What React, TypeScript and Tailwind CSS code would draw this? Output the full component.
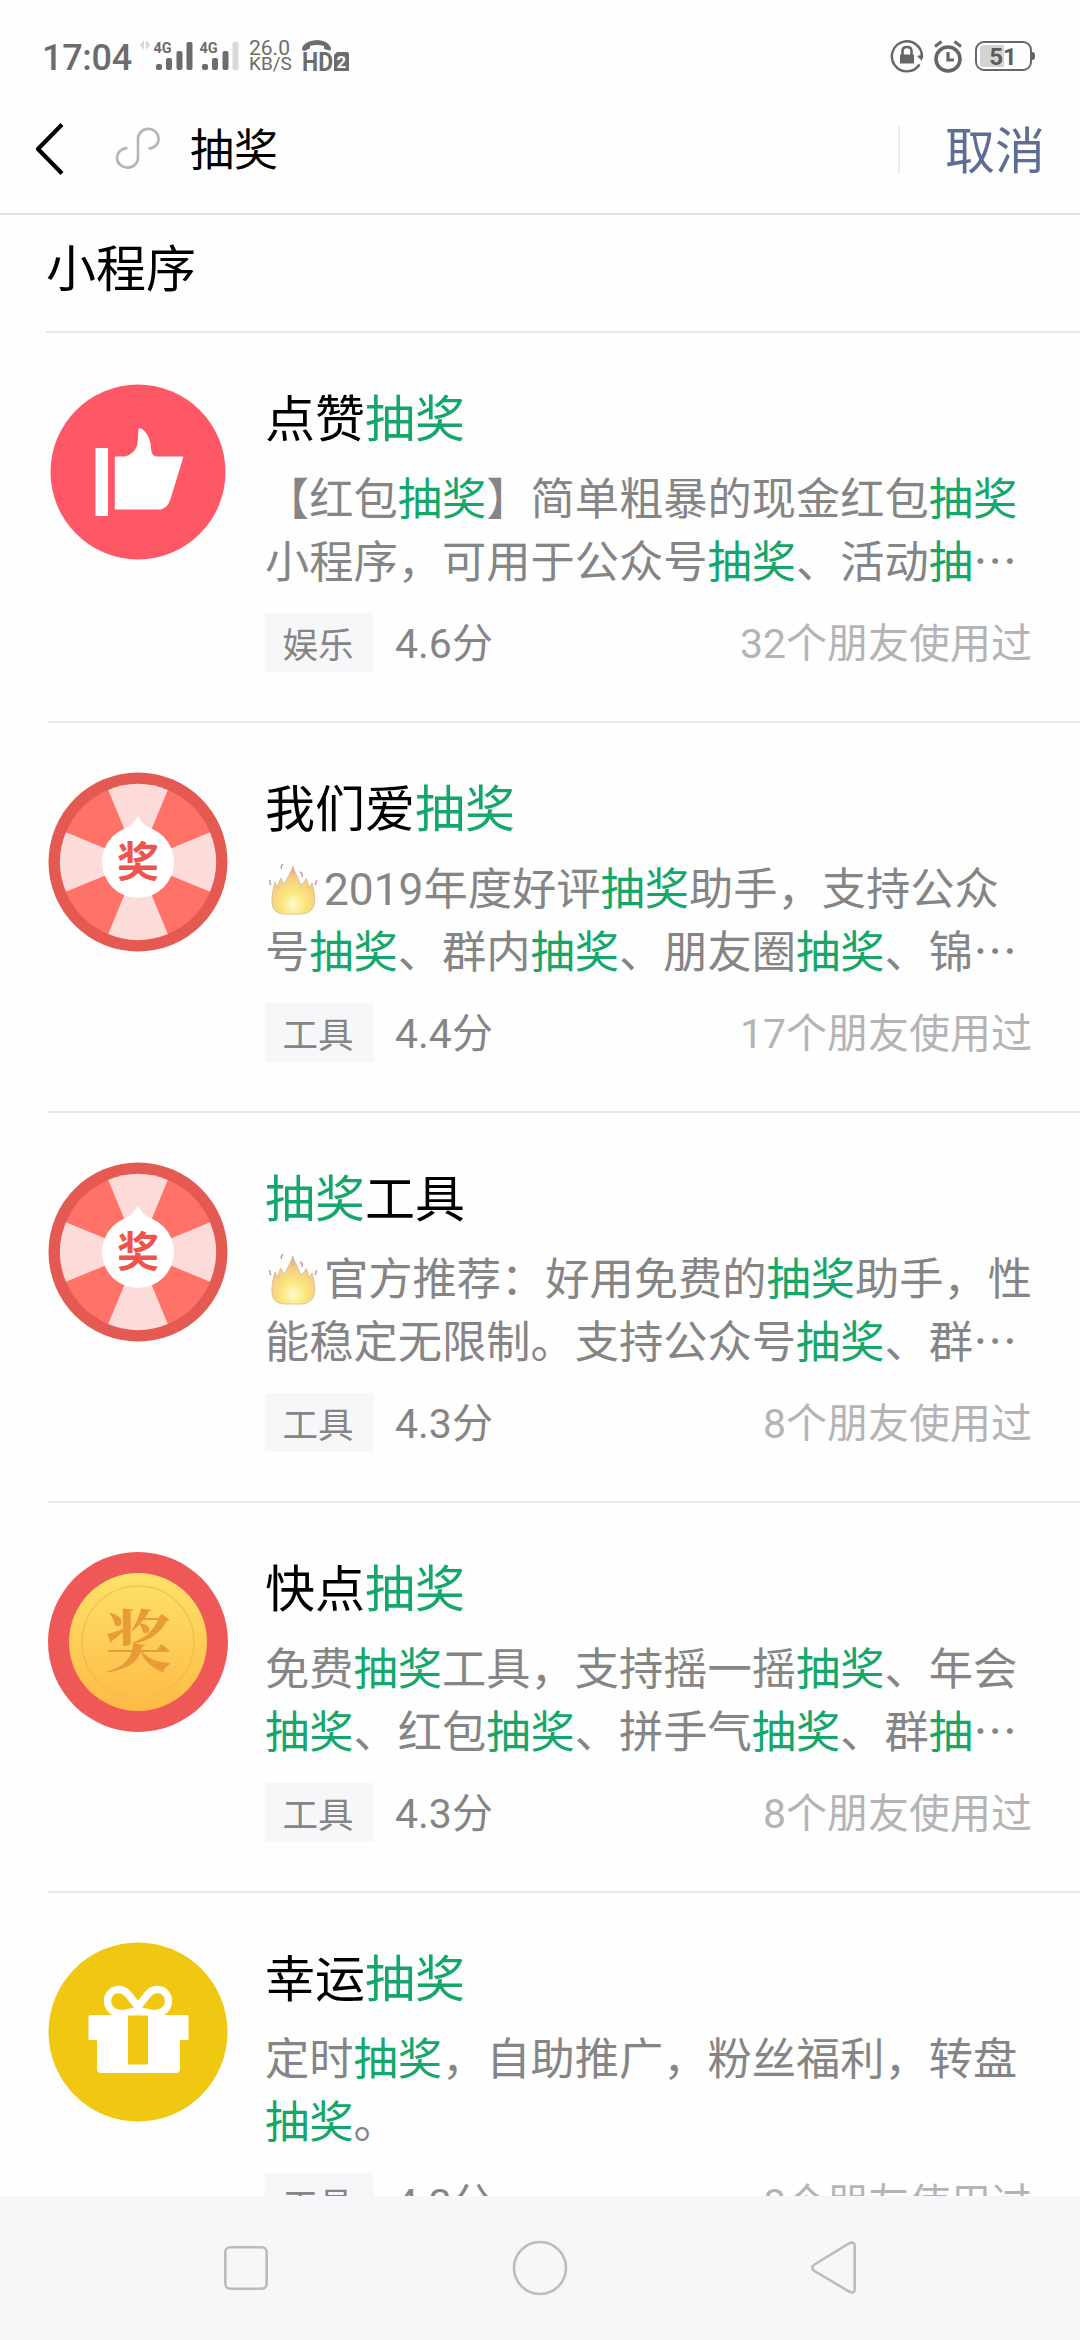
import type { ReactNode } from "react"

type AppItem = {
    icon: ReactNode
    title: string
    lines: string[]
    fire?: boolean
    more?: boolean
    tag: string
    score: string
    friends: number
}

const KEYWORD = "抽奖"

const LikeIcon = () => (
    <svg viewBox="0 0 180 180" className="size-[180px]">
        <circle cx="90" cy="90" r="87.5" fill="#fe5766" />
        <rect x="47.5" y="66" width="12.5" height="68" fill="#fff" />
        <path
            d="M66.8 74.500H77C85 72 89.500 67 89.800 58L90.500 47Q92 45 96 48.500Q102.500 55 103 66Q103 73 108 74.500H135.500L122.500 117Q119 127.500 111 127.500H66.800Z"
            fill="#fff"
        />
    </svg>
)

const WheelIcon = () => (
    <svg viewBox="0 0 180 180" className="size-[180px]">
        <circle cx="90" cy="90" r="89.5" fill="#e45a52" />
        <circle cx="90" cy="90" r="78" fill="#ff7268" />
        {[0, 90, 180, 270].map((deg) => (
            <path key={deg} d="M90 90L60.200 18A78 78 0 0 1 119.800 18Z" fill="#fddbd9" transform={`rotate(${deg} 90 90)`} />
        ))}
        <circle cx="90" cy="90" r="36" fill="#fff" />
        <path d="M90 44Q96 55 106 58L90 72L74 58Q84 55 90 44Z" fill="#fff" />
        <text x="90" y="105" textAnchor="middle" fontSize="42" fontWeight="700" fill="#ee544d" className="font-['Noto_Sans_CJK_SC',sans-serif]">奖</text>
    </svg>
)

const CoinIcon = () => (
    <svg viewBox="0 0 180 180" className="size-[180px]">
        <defs>
            <linearGradient id="coin" x1="0" y1="0" x2="0" y2="1">
                <stop offset="0" stopColor="#fee26a" />
                <stop offset="1" stopColor="#feba45" />
            </linearGradient>
        </defs>
        <circle cx="90" cy="90" r="90" fill="#ee5856" />
        <circle cx="90" cy="90" r="69" fill="url(#coin)" />
        <circle cx="90" cy="90" r="56" fill="none" stroke="#e9bd50" strokeWidth="1.2" />
        <text x="90" y="114" textAnchor="middle" fontSize="67" fontWeight="700" fill="#e79c38" className="font-['Noto_Serif_CJK_SC','Noto_Sans_CJK_SC',serif]">奖</text>
    </svg>
)

const GiftIcon = () => (
    <svg viewBox="0 0 180 180" className="size-[180px]">
        <circle cx="90" cy="90" r="89.5" fill="#f0c711" />
        <path
            d="M90 64C83 58 80 47.500 71 47.500C59 47.500 56 62 64 68.500Q68 72 77 71.500L90 68.500L103 71.500Q112 72 116 68.500C124 62 121 47.500 109 47.500C100 47.500 97 58 90 64Z"
            fill="none"
            stroke="#fff"
            strokeWidth="7.5"
            strokeLinejoin="round"
        />
        <path d="M42 73H139Q140.500 73 140.500 75V98H132V127Q132 131 128 131H53Q49 131 49 127V98H40.500V75Q40.500 73 42 73Z" fill="#fff" />
        <rect x="80" y="73.500" width="20" height="49" fill="#f0c711" />
    </svg>
)

const Fire = () => (
    <span className="inline-block w-[59px] h-[50px] align-[-8px] pl-[4px]">
        <svg viewBox="0 0 48 52" className="w-[48px] h-[52px]">
            <defs>
                <radialGradient id="flame" cx="0.5" cy="0.8" r="0.8">
                    <stop offset="0" stopColor="#fffac8" />
                    <stop offset="0.35" stopColor="#fbe67c" />
                    <stop offset="0.7" stopColor="#f5cc84" />
                    <stop offset="1" stopColor="#d9968a" />
                </radialGradient>
            </defs>
            <path
                d="M24 3C25 9 29 13 31.500 22C33 21 36 19 37 15.500C39 19 39.500 22 39.500 25L43 20C44.500 26 46.500 33 45.500 40C44.500 48 38 51 31 51H17C9 51 3.500 48 3 40C2.500 33 4 26 6 19L9.500 25C9.500 21 10 18 12 15C13 18 14 20 16 21C18 14 22 10 24 3Z"
                fill="url(#flame)"
                stroke="#dfc197"
                strokeWidth="1"
            />
            <path d="M14 1Q11 4 13 6M31 9Q34 10 33 14M1 17Q0 19 2 22M47 17Q48 19 46 22" fill="none" stroke="#c99c9c" strokeWidth="1.5" />
        </svg>
    </span>
)

// paints every occurrence of the keyword (also one cut off by the ellipsis) green
const Highlight = ({ text }: { text: string }) => (
    <>
        {text.split(/(抽奖|抽$)/).map((part, i) =>
            part === KEYWORD || part === "抽" ? <span key={i} className="text-[#14a769]">{part}</span> : part
        )}
    </>
)

const items: AppItem[] = [
    {
        icon: <LikeIcon />,
        title: "点赞抽奖",
        lines: ["【红包抽奖】简单粗暴的现金红包抽奖", "小程序，可用于公众号抽奖、活动抽"],
        more: true,
        tag: "娱乐",
        score: "4.6",
        friends: 32,
    },
    {
        icon: <WheelIcon />,
        title: "我们爱抽奖",
        lines: ["2019年度好评抽奖助手，支持公众", "号抽奖、群内抽奖、朋友圈抽奖、锦"],
        fire: true,
        more: true,
        tag: "工具",
        score: "4.4",
        friends: 17,
    },
    {
        icon: <WheelIcon />,
        title: "抽奖工具",
        lines: ["官方推荐：好用免费的抽奖助手，性", "能稳定无限制。支持公众号抽奖、群"],
        fire: true,
        more: true,
        tag: "工具",
        score: "4.3",
        friends: 8,
    },
    {
        icon: <CoinIcon />,
        title: "快点抽奖",
        lines: ["免费抽奖工具，支持摇一摇抽奖、年会", "抽奖、红包抽奖、拼手气抽奖、群抽"],
        more: true,
        tag: "工具",
        score: "4.3",
        friends: 8,
    },
    {
        icon: <GiftIcon />,
        title: "幸运抽奖",
        lines: ["定时抽奖，自助推广，粉丝福利，转盘", "抽奖。"],
        tag: "工具",
        score: "4.3",
        friends: 8,
    },
]

const Signal = ({ weak }: { weak?: boolean }) => (
    <svg viewBox="0 0 38 30" className="w-[38px] h-[30px] overflow-visible" fill="#6c6c6c">
        <text x="-1.5" y="12" fontSize="14.5" fontWeight="700" className="font-[Roboto,sans-serif]">4G</text>
        <rect x="1" y="23" width="6" height="6" rx="2" />
        <rect x="11" y="17" width="6" height="12" rx="2" />
        <rect x="21.500" y="10" width="6" height="19" rx="2" />
        <rect x="31.500" y="1" width="6" height="28" rx="2" fill={weak ? "#d9d9d9" : "#6c6c6c"} />
    </svg>
)

const StatusBar = () => (
    <div className="flex items-center h-[112px] pl-[42px] pr-[45px] text-[#6c6c6c]">
        <span className="text-[36px] leading-none font-medium tracking-[-0.3px] w-[98px] pt-[3px]">17:04</span>
        <svg viewBox="0 0 10 12" className="w-[10px] h-[12px] -mt-[22px]" fill="#d8d8d8">
            <path d="M4 1V11L0 6ZM6 1V11L10 6Z" />
        </svg>
        <div className="flex gap-[8px] ml-[5px]">
            <Signal />
            <Signal weak />
        </div>
        <div className="ml-[10px] w-[53px] flex flex-col leading-[15px]">
            <span className="text-[21px]">26.0</span>
            <span className="text-[19px]">KB/S</span>
        </div>
        <svg viewBox="0 0 48 32" className="w-[48px] h-[32px] overflow-visible" fill="#6c6c6c">
            <path d="M0 8Q3 0.500 15.500 0Q26 0.500 29 8Q29.500 11 27 10.500L22 9V6Q15 4 8 6V8.500L2.500 11Q0 11 0 8Z" />
            <text x="0" y="31" fontSize="25.5" fontWeight="700" textLength="31" lengthAdjust="spacingAndGlyphs" className="font-[Roboto,sans-serif]">HD</text>
            <path d="M35 12H45Q47 12 47 14V31H32V15Z" />
            <text x="34.500" y="27.500" fontSize="17" fontWeight="700" fill="#fff" className="font-[Roboto,sans-serif]">2</text>
        </svg>
        <div className="flex items-center ml-auto">
            <svg viewBox="0 0 34 34" className="w-[34px] h-[34px]" fill="none" stroke="#666" strokeWidth="2.4">
                <path d="M29.500 25.500A15 15 0 1 1 31.800 19" />
                <path d="M27 17L33 15.500L32 22Z" fill="#666" stroke="none" />
                <rect x="10" y="15.500" width="14" height="9" fill="#666" stroke="none" />
                <path d="M12.500 16V12Q12.500 8 17 8Q21.500 8 21.500 12V16" strokeWidth="2.600" />
            </svg>
            <svg viewBox="0 0 30 34" className="w-[30px] h-[34px] ml-[9px]" fill="none" stroke="#666" strokeWidth="3.600">
                <circle cx="15" cy="20" r="12" />
                <path d="M15 13V21H21" strokeWidth="3.200" />
                <path d="M2 7.500L8.500 2.500M28 7.500L21.500 2.500" strokeWidth="3" />
            </svg>
            <div className="relative flex items-center justify-center ml-[12px] w-[57px] h-[30px] mt-[-1px] border-2 border-[#666] rounded-[9px]">
                <span className="absolute left-[3px] top-[2px] w-[24px] h-[22px] rounded-l-[4px] bg-[#d3d3d3]"></span>
                <span className="relative text-[24px] leading-none font-bold text-[#5c5c5c] pt-[2px] pr-px">51</span>
            </div>
            <span className="w-[3px] h-[8px] bg-[#666] rounded-r-sm"></span>
        </div>
    </div>
)

const SearchBar = () => (
    <div className="flex items-center h-[103px] pb-[28px] box-border border-b-2 border-[#e3e3e3]">
        <svg viewBox="0 0 30 52" className="w-[30px] h-[52px] ml-[35px]" fill="none" stroke="#000" strokeWidth="4.200">
            <path d="M27 1.500L3 26L27 50.500" strokeLinejoin="round" />
        </svg>
        <svg viewBox="0 0 44 40" className="w-[44px] h-[40px] ml-[51px] mt-[-2px] overflow-visible" fill="none" stroke="#b5b5b5" strokeWidth="2.600">
            <path d="M11.500 20A10.500 9.800 0 1 0 22 29V11A10.300 9.800 0 1 1 32.500 20.500" />
        </svg>
        <span className="ml-[30px] pt-[5px] text-[44px] leading-none text-black">{KEYWORD}</span>
        <span className="ml-auto w-[2px] h-[48px] mt-[2px] bg-[#ececec]"></span>
        <span className="ml-[45px] mr-[35px] pt-[6px] text-[50px] leading-none text-[#5f6d92]">取消</span>
    </div>
)

const ItemRow = ({ item }: { item: AppItem }) => (
    <div className="flex shrink-0 ml-[48px] h-[390px] border-b-2 border-[#e8e7ea]">
        <div className="mt-[49px] w-[217px] shrink-0">{item.icon}</div>
        <div className="flex-1 pt-[57px] pr-[48px]">
            <h2 className="text-[50px] leading-[60px] text-black"><Highlight text={item.title} /></h2>
            <div className="mt-[19px] text-[44.25px] leading-[63px] text-[#858585] whitespace-nowrap">
                <p className="h-[63px]">
                    {item.fire && <Fire />}
                    <Highlight text={item.lines[0]} />
                </p>
                <p className="h-[63px]">
                    <Highlight text={item.lines[1]} />
                    {item.more && <span className="leading-none font-['Noto_Sans_CJK_SC',sans-serif]">…</span>}
                </p>
            </div>
            <div className="flex items-center mt-[18px] h-[59px] text-[41px] leading-[63px]">
                <span className="w-[109px] h-[59px] pr-[3px] text-center text-[35.5px] leading-[67px] bg-[#f7f7f9] text-[#858585]">{item.tag}</span>
                <span className="ml-[21px] h-[59px] text-[#858585]">{item.score}分</span>
                <span className="ml-auto h-[59px] text-[#b4b4b6]">{item.friends}个朋友使用过</span>
            </div>
        </div>
    </div>
)

const NavBar = () => (
    <div className="flex items-center justify-between shrink-0 h-[144px] px-[218px] bg-[#f7f7f9]">
        <svg viewBox="0 0 56 56" className="size-[56px]" fill="none" stroke="#bcbcbe" strokeWidth="2.600">
            <rect x="7.300" y="7.300" width="41.400" height="41.400" rx="5" />
        </svg>
        <svg viewBox="0 0 56 56" className="size-[56px]" fill="none" stroke="#bcbcbe" strokeWidth="2.600">
            <circle cx="28" cy="28" r="26" />
        </svg>
        <svg viewBox="0 0 56 56" className="size-[56px]" fill="none" stroke="#bcbcbe" strokeWidth="2.600">
            <path d="M8.500 24.500L43 3.500Q48.700 1 48.700 6V49Q48.700 54 43 51.500L8.500 31Q4 27.700 8.500 24.500Z" />
        </svg>
    </div>
)

const App = () => {
    return (
        <div className="flex flex-col w-[1080px] h-[2340px] overflow-hidden bg-[#fefefe] font-[Roboto,'Noto_Sans_CJK_SC',sans-serif]">
            <StatusBar />
            <SearchBar />
            <div className="flex items-center ml-[46px] h-[118px] pb-[7px] border-b-2 border-[#e8e8e8]">
                <h1 className="text-[50px] leading-none text-black">小程序</h1>
            </div>
            <div className="flex flex-col flex-1 min-h-0 overflow-hidden">
                {items.map((item) => (
                    <ItemRow key={item.title} item={item} />
                ))}
            </div>
            <NavBar />
        </div>
    )
}

export default App
